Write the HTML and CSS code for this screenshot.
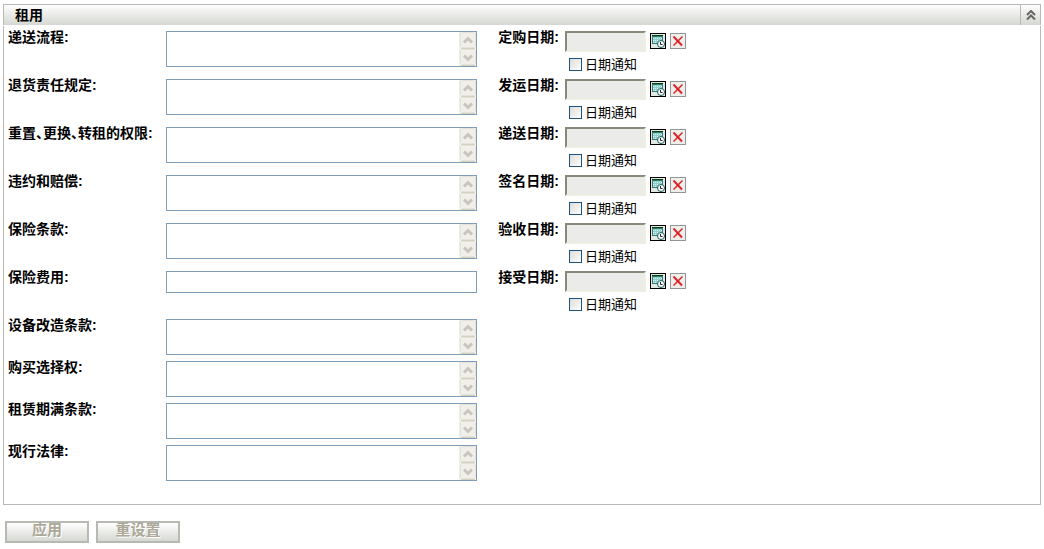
FILE: index.html
```
<!DOCTYPE html>
<html lang="zh-CN">

<head>
    <meta charset="UTF-8">
    <meta name="viewport" content="width=device-width, initial-scale=1.0">
    <title>租用</title>
    <link rel="stylesheet" href="styles.css">
</head>

<body>
    <!-- 图标 -->
    <svg class="sprite" aria-hidden="true">
        <symbol id="scroll" viewBox="0 0 17 34">
            <rect width="17" height="34" fill="#fbfaf6" />
            <path d="M0.5 0V34" stroke="#eeede5" />
            <rect x="1.5" y="0.5" width="15" height="15" rx="1" fill="#f0efe9" stroke="#e4e3da" />
            <rect x="1.5" y="17.5" width="15" height="15" rx="1" fill="#f0efe9" stroke="#e4e3da" />
            <path d="M2 16.5H16M2 33.5H16" stroke="#d3d1bf" />
            <path d="M5 10.5L9 6.5L13 10.5M5 23.5L9 27.5L13 23.5" fill="none" stroke="#c6c6bf" stroke-width="3" />
        </symbol>
        <symbol id="calendar" viewBox="0 0 16 16">
            <rect x="0.5" y="0.5" width="15" height="15" fill="#e4e6e2" stroke="#000" />
            <rect x="2" y="2" width="11" height="9" fill="#2f7d74" />
            <path d="M2 2.5H13" stroke="#0a3d10" />
            <rect x="3" y="4" width="9" height="6" fill="#8fcfc8" />
            <path d="M3 5.5H12M3 7.5H12M3 9.5H8" stroke="#d8f2ee" stroke-dasharray="1 1" />
            <circle cx="11" cy="11" r="3.5" fill="#fff" stroke="#1b5a5e" />
            <path d="M10.5 9V11.5H12.5" fill="none" stroke="#222" />
        </symbol>
        <symbol id="delete" viewBox="0 0 16 16">
            <rect x="0.5" y="0.5" width="15" height="15" fill="#eeeeec" stroke="#949494" />
            <path d="M3.5 3.5L12 12.5" stroke="#e02424" stroke-width="2" />
            <path d="M12.5 3.5L3.5 12.5" stroke="#d42222" stroke-width="1.5" />
        </symbol>
    </svg>

    <form action="#">
        <div class="header">
            <h2>租用</h2>
            <button type="button" class="collapse" aria-label="折叠">
                <svg width="10" height="10" viewBox="0 0 10 10">
                    <path d="M1 5L5 1L9 5M1 9.5L5 5.5L9 9.5" fill="none" stroke="#666" stroke-width="2" />
                </svg>
            </button>
        </div>

        <div class="panel">
            <div class="row">
                <label for="t1">递送流程:</label>
                <div class="area"><textarea id="t1"></textarea><svg><use href="#scroll" /></svg></div>
                <label class="right" for="d1">定购日期:</label>
                <div class="date">
                    <div class="pick">
                        <input type="text" id="d1" readonly>
                        <button type="button" aria-label="选择日期"><svg><use href="#calendar" /></svg></button>
                        <button type="button" aria-label="清除日期"><svg><use href="#delete" /></svg></button>
                    </div>
                    <label class="notify"><input type="checkbox">日期通知</label>
                </div>
            </div>
            <div class="row">
                <label for="t2">退货责任规定:</label>
                <div class="area"><textarea id="t2"></textarea><svg><use href="#scroll" /></svg></div>
                <label class="right" for="d2">发运日期:</label>
                <div class="date">
                    <div class="pick">
                        <input type="text" id="d2" readonly>
                        <button type="button" aria-label="选择日期"><svg><use href="#calendar" /></svg></button>
                        <button type="button" aria-label="清除日期"><svg><use href="#delete" /></svg></button>
                    </div>
                    <label class="notify"><input type="checkbox">日期通知</label>
                </div>
            </div>
            <div class="row">
                <label for="t3">重置、更换、转租的权限:</label>
                <div class="area"><textarea id="t3"></textarea><svg><use href="#scroll" /></svg></div>
                <label class="right" for="d3">递送日期:</label>
                <div class="date">
                    <div class="pick">
                        <input type="text" id="d3" readonly>
                        <button type="button" aria-label="选择日期"><svg><use href="#calendar" /></svg></button>
                        <button type="button" aria-label="清除日期"><svg><use href="#delete" /></svg></button>
                    </div>
                    <label class="notify"><input type="checkbox">日期通知</label>
                </div>
            </div>
            <div class="row">
                <label for="t4">违约和赔偿:</label>
                <div class="area"><textarea id="t4"></textarea><svg><use href="#scroll" /></svg></div>
                <label class="right" for="d4">签名日期:</label>
                <div class="date">
                    <div class="pick">
                        <input type="text" id="d4" readonly>
                        <button type="button" aria-label="选择日期"><svg><use href="#calendar" /></svg></button>
                        <button type="button" aria-label="清除日期"><svg><use href="#delete" /></svg></button>
                    </div>
                    <label class="notify"><input type="checkbox">日期通知</label>
                </div>
            </div>
            <div class="row">
                <label for="t5">保险条款:</label>
                <div class="area"><textarea id="t5"></textarea><svg><use href="#scroll" /></svg></div>
                <label class="right" for="d5">验收日期:</label>
                <div class="date">
                    <div class="pick">
                        <input type="text" id="d5" readonly>
                        <button type="button" aria-label="选择日期"><svg><use href="#calendar" /></svg></button>
                        <button type="button" aria-label="清除日期"><svg><use href="#delete" /></svg></button>
                    </div>
                    <label class="notify"><input type="checkbox">日期通知</label>
                </div>
            </div>
            <div class="row">
                <label for="t6">保险费用:</label>
                <input type="text" class="text" id="t6">
                <label class="right" for="d6">接受日期:</label>
                <div class="date">
                    <div class="pick">
                        <input type="text" id="d6" readonly>
                        <button type="button" aria-label="选择日期"><svg><use href="#calendar" /></svg></button>
                        <button type="button" aria-label="清除日期"><svg><use href="#delete" /></svg></button>
                    </div>
                    <label class="notify"><input type="checkbox">日期通知</label>
                </div>
            </div>
            <div class="row short">
                <label for="t7">设备改造条款:</label>
                <div class="area"><textarea id="t7"></textarea><svg><use href="#scroll" /></svg></div>
            </div>
            <div class="row short">
                <label for="t8">购买选择权:</label>
                <div class="area"><textarea id="t8"></textarea><svg><use href="#scroll" /></svg></div>
            </div>
            <div class="row short">
                <label for="t9">租赁期满条款:</label>
                <div class="area"><textarea id="t9"></textarea><svg><use href="#scroll" /></svg></div>
            </div>
            <div class="row short">
                <label for="t10">现行法律:</label>
                <div class="area"><textarea id="t10"></textarea><svg><use href="#scroll" /></svg></div>
            </div>
        </div>

        <div class="buttons">
            <button type="submit" disabled>应用</button>
            <button type="reset" disabled>重设置</button>
        </div>
    </form>
</body>

</html>
```
FILE: styles.css
```
* {
    box-sizing: border-box;
}

body {
    margin: 4px 3px;
    background-color: #fff;
    color: #000;
    font-family: "Liberation Sans", "Noto Sans CJK SC", sans-serif;
    font-size: 14px;
    line-height: 16px;
}

button,
input,
textarea {
    margin: 0;
    padding: 0;
    font-family: inherit;
}

.sprite {
    display: none;
}

/* 标题栏 */
.header {
    display: flex;
    height: 21px;
    border: 1px solid #b9bab5;
    border-bottom: 0;
    background-image: linear-gradient(#fdfdfd, #d5d8d2);
}

.header h2 {
    flex: 1;
    margin: 0;
    padding-left: 11px;
    font-size: 14px;
    line-height: 20px;
}

.collapse {
    display: flex;
    align-items: center;
    justify-content: center;
    width: 20px;
    border: 0;
    border-left: 1px solid #b9bab5;
    background: none;
}

/* 表单内容 */
.panel {
    margin-top: 1px;
    padding: 3px 4px 19px;
    border: 1px solid #b9bab5;
    border-top: 0;
}

.row {
    display: grid;
    grid-template-columns: 158px 311px 82px auto;
    align-items: start;
    justify-content: start;
    height: 48px;
}

.short {
    height: 42px;
}

.row>label {
    font-weight: bold;
    white-space: nowrap;
    /* 顿号占半角 */
    font-feature-settings: "halt";
}

.row>.right {
    text-align: right;
}

.area,
.text {
    margin-top: 2px;
    border: 1px solid #7f9db9;
    background-color: #fff;
}

.area {
    display: flex;
    height: 36px;
}

.area textarea {
    flex: 1;
    border: 0;
    outline: 0;
    resize: none;
    overflow: hidden;
}

.area svg {
    width: 17px;
    height: 34px;
}

.text {
    height: 22px;
}

/* 日期 */
.date {
    padding: 2px 0 0 6px;
}

.pick {
    display: flex;
    gap: 4px;
}

.pick input {
    width: 81px;
    height: 21px;
    border: 2px solid;
    border-color: #8a877b #efeee2 #efeee2 #8a877b;
    background-color: #ebebe9;
}

.pick button {
    width: 16px;
    height: 16px;
    margin-top: 2px;
    border: 0;
    background: none;
}

.pick svg {
    display: block;
    width: 16px;
    height: 16px;
}

.notify {
    display: flex;
    align-items: flex-start;
    gap: 3px;
    margin-top: 5px;
    padding-left: 4px;
    font-size: 13px;
}

.notify input {
    appearance: none;
    width: 13px;
    height: 13px;
    margin-top: 1px;
    border: 1px solid #1d5281;
    background-image: linear-gradient(135deg, #dcdcd7, #fff);
}

/* 底部按钮 */
.buttons {
    display: flex;
    gap: 7px;
    margin: 16px 2px 0;
}

.buttons button {
    width: 84px;
    height: 22px;
    padding-bottom: 4px;
    border: 2px solid #b7bab3;
    background-image: linear-gradient(#fff, #d5d8d2);
    color: #aca899;
    font-size: 15px;
    font-weight: bold;
    line-height: 14px;
    text-shadow: 1px 1px #fff;
}
```
